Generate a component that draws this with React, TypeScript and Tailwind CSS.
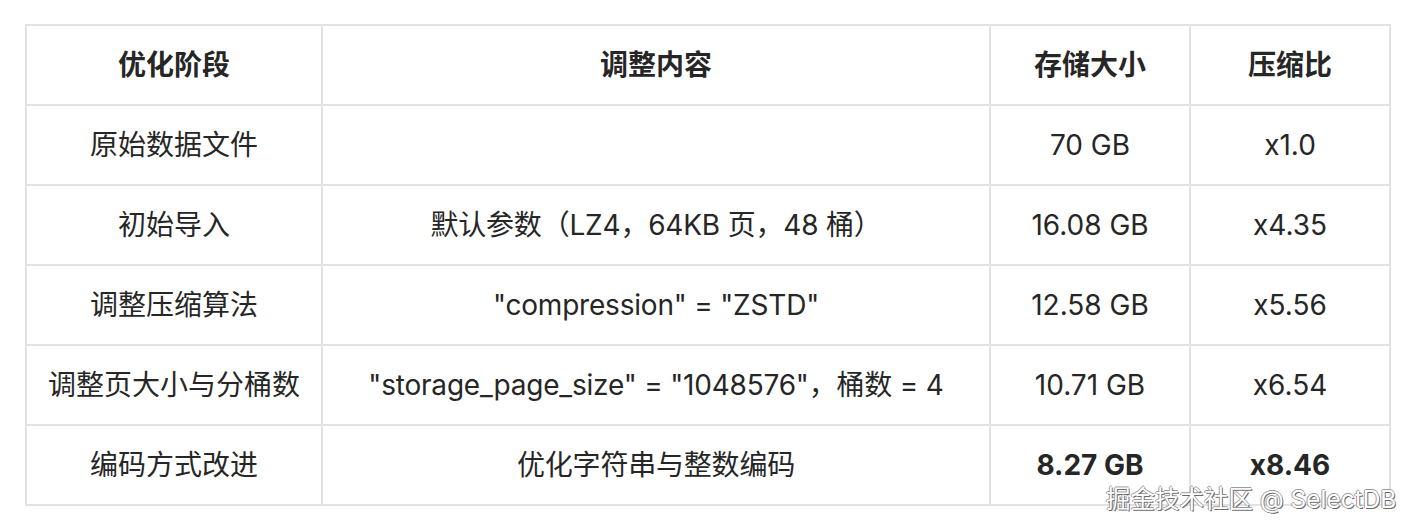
import React from 'react';

const rows = [
  { stage: '原始数据文件', change: '', size: '70 GB', ratio: 'x1.0' },
  { stage: '初始导入', change: '默认参数（LZ4，64KB 页，48 桶）', size: '16.08 GB', ratio: 'x4.35' },
  { stage: '调整压缩算法', change: '"compression" = "ZSTD"', size: '12.58 GB', ratio: 'x5.56' },
  { stage: '调整页大小与分桶数', change: '"storage_page_size" = "1048576"，桶数 = 4', size: '10.71 GB', ratio: 'x6.54' },
  { stage: '编码方式改进', change: '优化字符串与整数编码', size: '8.27 GB', ratio: 'x8.46', bold: true },
];

const cell = 'h-20 flex items-center justify-center border-r-2 border-b-2 border-[#e2e2e2] whitespace-nowrap';

export default function App() {
  return <div className="relative w-[1416px] h-[530px] bg-white text-[#262626] font-['Inter','Noto_Sans_CJK_SC',sans-serif] text-[28px]">
      <div className="absolute left-[25px] top-[24px] w-[1366px] border-t-2 border-l-2 border-[#e2e2e2] grid grid-cols-[296px_668px_200px_200px]">
        <div className={`${cell} font-bold`}>优化阶段</div>
        <div className={`${cell} font-bold`}>调整内容</div>
        <div className={`${cell} font-bold`}>存储大小</div>
        <div className={`${cell} font-bold`}>压缩比</div>
        {rows.map((r, i) => <React.Fragment key={i}>
            <div className={cell}>{r.stage}</div>
            <div className={`${cell} tracking-[-0.2px]`}>{r.change}</div>
            <div className={`${cell} ${r.bold ? 'font-bold' : ''}`}>{r.size}</div>
            <div className={`${cell} ${r.bold ? 'font-bold' : ''}`}>{r.ratio}</div>
          </React.Fragment>)}
      </div>
      <div className="absolute left-[1106px] top-[481px] text-[24.5px] text-white whitespace-nowrap [text-shadow:1px_1px_0_#6b6b6b,-1px_0_0_#9a9a9a,0_-1px_0_#9a9a9a]">
        掘金技术社区 @ SelectDB
      </div>
    </div>;
}
